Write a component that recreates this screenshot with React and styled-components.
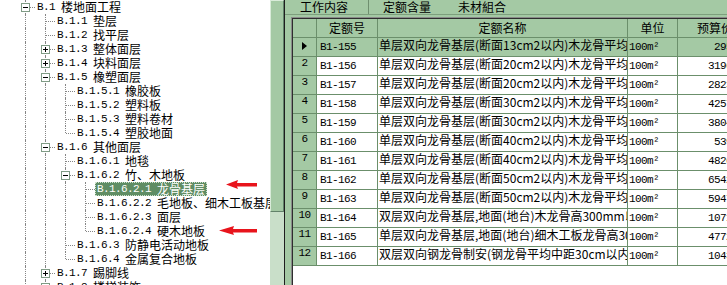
import styled, { createGlobalStyle } from "styled-components";

const GREEN = "#a4c9a4";
const GRID = "#6b8f6b";

const GlobalStyle = createGlobalStyle`
  html, body {
    margin: 0;
    padding: 0;
    background: #fff;
    overflow: hidden;
  }
  body {
    font-family: "Noto Sans CJK SC", sans-serif;
    font-size: 12px;
    color: #000;
  }
`;

const Screen = styled.div`
  display: flex;
  width: 727px;
  height: 285px;
  overflow: hidden;
`;

/* ---------- tree ---------- */

const TreePane = styled.div`
  position: relative;
  flex: 0 0 270px;
  background: #fff;
  overflow: hidden;
`;

const TreeRow = styled.div`
  display: flex;
  align-items: center;
  height: 14px;
  padding-left: 15px;
  white-space: nowrap;
`;

const Guide = styled.span`
  position: relative;
  flex: 0 0 20px;
  height: 14px;

  &::before {
    content: "";
    display: ${(p) => (p.$line === "none" ? "none" : "block")};
    position: absolute;
    left: 10px;
    top: 0;
    height: ${(p) => (p.$line === "half" ? "7px" : "14px")};
    border-left: 1px dotted #868686;
  }

  &::after {
    content: "";
    display: ${(p) => (p.$elbow ? "block" : "none")};
    position: absolute;
    left: 11px;
    right: 0;
    top: 7px;
    border-top: 1px dotted #868686;
  }
`;

const Expander = styled.span`
  position: absolute;
  z-index: 1;
  left: 6px;
  top: 3px;
  width: 9px;
  height: 9px;
  box-sizing: border-box;
  border: 1px solid #7f9b85;
  background: #fff;

  &::before {
    content: "";
    position: absolute;
    left: 1px;
    top: 3px;
    width: 5px;
    height: 1px;
    background: #000;
  }

  &::after {
    content: "";
    display: ${(p) => (p.$open ? "none" : "block")};
    position: absolute;
    left: 3px;
    top: 1px;
    width: 1px;
    height: 5px;
    background: #000;
  }
`;

const Label = styled.span`
  display: inline-flex;
  align-items: center;
  height: 14px;
  padding: 0 2px;
  line-height: 14px;
  background: ${(p) => (p.$selected ? "#5f8d64" : "transparent")};
  color: ${(p) => (p.$selected ? "#fff" : "#000")};
  outline: ${(p) => (p.$selected ? "1px dotted #cfe2cf" : "none")};
  outline-offset: -1px;
`;

const Mono = styled.span`
  font-family: "Liberation Mono", monospace;
  font-size: 11px;
  letter-spacing: -0.6px;
  white-space: pre;
`;

const Arrows = styled.svg`
  position: absolute;
  left: 0;
  top: 0;
  pointer-events: none;
`;

const ScrollBar = styled.div`
  flex: 0 0 15px;
  box-sizing: border-box;
  background: #c9dfc9;
  border-right: 1px solid #1e1e1e;
`;

const Thumb = styled.div`
  height: 212px;
  box-sizing: border-box;
  background: ${GREEN};
  border-left: 1px solid #d9ebd9;
  border-top: 1px solid #d9ebd9;
  border-right: 1px solid #62826a;
  border-bottom: 1px solid #62826a;
`;

/* ---------- right side ---------- */

const RightPane = styled.div`
  flex: 1;
  display: flex;
  flex-direction: column;
  background: ${GREEN};
  min-width: 0;
`;

const TabBar = styled.div`
  display: flex;
  height: 14px;
  padding-left: 1px;
  border-bottom: 1px solid #7d9f7d;
`;

const Tab = styled.div`
  flex: 0 0 ${(p) => (p.$w ? `${p.$w}px` : "auto")};
  box-sizing: border-box;
  padding-left: 14px;
  line-height: 14px;
  white-space: nowrap;
  border-right: ${(p) => (p.$sep ? "1px solid #6f8f6f" : "none")};
`;

const GridWrap = styled.div`
  flex: 1;
  margin: 2px 0 0 6px;
  background: #fff;
  border-top: 1px solid #8a8a8a;
  border-left: 1px solid #8a8a8a;
  overflow: hidden;
`;

const GridInner = styled.div`
  height: 100%;
  box-sizing: border-box;
  border-top: 1px solid #2e2e2e;
  border-left: 1px solid #2e2e2e;
`;

const GridRow = styled.div`
  display: flex;
  width: max-content;
`;

const Cell = styled.div`
  flex: 0 0 ${(p) => p.$w}px;
  box-sizing: border-box;
  height: 19px;
  border-right: 1px solid ${GRID};
  border-bottom: 1px solid ${GRID};
  background: ${(p) => (p.$green ? GREEN : "#fff")};
  text-align: ${(p) => p.$align || "left"};
  padding: ${(p) => p.$pad || "0"};
  line-height: 13px;
  white-space: nowrap;
  overflow: hidden;
`;

const HeadCell = styled(Cell)`
  background: ${GREEN};
  text-align: center;
  line-height: 18px;
`;

const IndicatorCell = styled(Cell)`
  display: flex;
  justify-content: center;
  align-items: flex-start;
  background: ${GREEN};
`;

const Pointer = styled.span`
  margin-top: 4px;
  width: 0;
  height: 0;
  border-left: 5px solid #000;
  border-top: 4px solid transparent;
  border-bottom: 4px solid transparent;
`;

const COLS = [24, 61, 250, 50, 75];

const tree = [
  [0, "B.1", "楼地面工程", "-"],
  [1, "B.1.1", "垫层"],
  [1, "B.1.2", "找平层"],
  [1, "B.1.3", "整体面层", "+"],
  [1, "B.1.4", "块料面层", "+"],
  [1, "B.1.5", "橡塑面层", "-"],
  [2, "B.1.5.1", "橡胶板"],
  [2, "B.1.5.2", "塑料板"],
  [2, "B.1.5.3", "塑料卷材"],
  [2, "B.1.5.4", "塑胶地面"],
  [1, "B.1.6", "其他面层", "-"],
  [2, "B.1.6.1", "地毯"],
  [2, "B.1.6.2", "竹、木地板", "-"],
  [3, "B.1.6.2.1", "龙骨基层", null, true],
  [3, "B.1.6.2.2", "毛地板、细木工板基层"],
  [3, "B.1.6.2.3", "面层"],
  [3, "B.1.6.2.4", "硬木地板"],
  [2, "B.1.6.3", "防静电活动地板"],
  [2, "B.1.6.4", "金属复合地板"],
  [1, "B.1.7", "踢脚线", "+"],
  [1, "B.1.8", "楼梯装饰", "+"],
];

// the list continues below the visible part: B.1.9 ..., then B.2
const levels = [...tree.map((t) => t[0]), 1, 0];

const hasNext = (i, k) => {
  for (let j = i + 1; j < levels.length; j++) {
    if (levels[j] < k) return false;
    if (levels[j] === k) return true;
  }
  return false;
};

const rows = [
  ["B1-155", "单层双向龙骨基层(断面13cm2以内)木龙骨平均中距", "2955.1"],
  ["B1-156", "单层双向龙骨基层(断面20cm2以内)木龙骨平均中距", "3196.85"],
  ["B1-157", "单层双向龙骨基层(断面20cm2以内)木龙骨平均中距", "2823.47"],
  ["B1-158", "单层双向龙骨基层(断面30cm2以内)木龙骨平均中距", "4257.62"],
  ["B1-159", "单层双向龙骨基层(断面30cm2以内)木龙骨平均中距", "3804.19"],
  ["B1-160", "单层双向龙骨基层(断面40cm2以内)木龙骨平均中距", "5391.2"],
  ["B1-161", "单层双向龙骨基层(断面40cm2以内)木龙骨平均中距", "4826.53"],
  ["B1-162", "单层双向龙骨基层(断面50cm2以内)木龙骨平均中距", "6542.08"],
  ["B1-163", "单层双向龙骨基层(断面50cm2以内)木龙骨平均中距", "5947.31"],
  ["B1-164", "双层双向龙骨基层,地面(地台)木龙骨高300mm以内", "1071.35"],
  ["B1-165", "单层双向龙骨基层,地面(地台)细木工板龙骨高300mm以内", "4772.64"],
  ["B1-166", "双层双向钢龙骨制安(钢龙骨平均中距30cm以内)", "1043.58"],
];

const TreeItem = ({ index, level, code, name, exp, selected }) => {
  const guides = [];
  for (let k = 0; k <= level; k++) {
    const own = k === level;
    const next = hasNext(index, k);
    const line = next ? "full" : own ? "half" : "none";
    guides.push(
      <Guide key={k} $line={line} $elbow={own}>
        {own && exp && <Expander $open={exp === "-"} />}
      </Guide>
    );
  }
  return (
    <TreeRow>
      {guides}
      <Label $selected={selected}>
        <Mono>{code + " "}</Mono>
        {name}
      </Label>
    </TreeRow>
  );
};

const App = () => {
  return (
    <>
      <GlobalStyle />
      <Screen>
        <TreePane>
          {tree.map(([level, code, name, exp, selected], i) => (
            <TreeItem
              key={code}
              index={i}
              level={level}
              code={code}
              name={name}
              exp={exp}
              selected={selected}
            />
          ))}
          <Arrows width="270" height="285" viewBox="0 0 270 285">
            <path d="M226 184.5 L238 180 L237 183 L257 183 L257 186.5 L237 186.5 L238 189 Z" fill="#e8141c" />
            <path d="M219 230.5 L234 226 L233 229 L257 229 L257 232.5 L233 232.5 L234 235 Z" fill="#e8141c" />
          </Arrows>
        </TreePane>
        <ScrollBar>
          <Thumb />
        </ScrollBar>
        <RightPane>
          <TabBar>
            <Tab $w={83} $sep>工作内容</Tab>
            <Tab $w={75}>定额含量</Tab>
            <Tab>未材組合</Tab>
          </TabBar>
          <GridWrap>
            <GridInner>
              <GridRow>
                <HeadCell $w={COLS[0]} />
                <HeadCell $w={COLS[1]}>定额号</HeadCell>
                <HeadCell $w={COLS[2]}>定额名称</HeadCell>
                <HeadCell $w={COLS[3]}>单位</HeadCell>
                <HeadCell $w={COLS[4]}>预算价</HeadCell>
              </GridRow>
              {rows.map(([code, name, price], i) => {
                const sel = i === 0;
                return (
                  <GridRow key={code}>
                    <IndicatorCell $w={COLS[0]}>
                      {sel ? <Pointer /> : <Mono>{i + 1}</Mono>}
                    </IndicatorCell>
                    <Cell $w={COLS[1]} $green={sel} $pad="0 0 0 3px">
                      <Mono>{code}</Mono>
                    </Cell>
                    <Cell $w={COLS[2]} $green={sel} $pad="0 0 0 1px">
                      {name}
                    </Cell>
                    <Cell $w={COLS[3]} $green={sel} $pad="0 0 0 1px">
                      <Mono>100m²</Mono>
                    </Cell>
                    <Cell $w={COLS[4]} $green={sel} $align="right" $pad="0 2px 0 0">
                      <Mono>{price}</Mono>
                    </Cell>
                  </GridRow>
                );
              })}
            </GridInner>
          </GridWrap>
        </RightPane>
      </Screen>
    </>
  );
};

export default App;
